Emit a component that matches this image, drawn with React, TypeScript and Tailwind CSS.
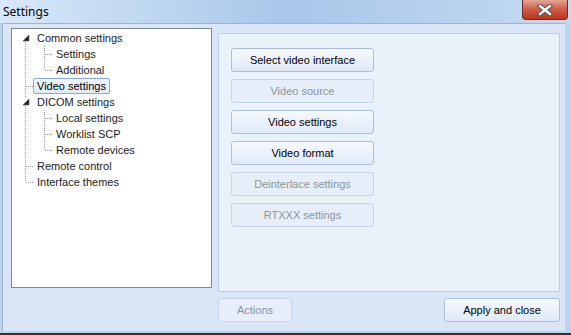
import React from 'react';

type TreeRow = {
    label: string;
    level: number;
    expander?: boolean;
    up: boolean;
    down: boolean;
    trunks: boolean[];
    selected?: boolean;
};

const rows: TreeRow[] = [
    { label: 'Common settings', level: 0, expander: true, up: false, down: true, trunks: [] },
    { label: 'Settings', level: 1, up: true, down: true, trunks: [true] },
    { label: 'Additional', level: 1, up: true, down: false, trunks: [true] },
    { label: 'Video settings', level: 0, up: true, down: true, trunks: [], selected: true },
    { label: 'DICOM settings', level: 0, expander: true, up: true, down: true, trunks: [] },
    { label: 'Local settings', level: 1, up: true, down: true, trunks: [true] },
    { label: 'Worklist SCP', level: 1, up: true, down: true, trunks: [true] },
    { label: 'Remote devices', level: 1, up: true, down: false, trunks: [true] },
    { label: 'Remote control', level: 0, up: true, down: true, trunks: [] },
    { label: 'Interface themes', level: 0, up: true, down: false, trunks: [] },
];

const DOT = '#a0a0a0';

// vertical trunk for an ancestor that still has siblings below
function Trunk({ on }: { on: boolean }) {
    return (
        <svg width="19" height="16" className="shrink-0" shapeRendering="crispEdges">
            {on && <line x1="13.5" y1="0" x2="13.5" y2="16" stroke={DOT} strokeDasharray="1 1" />}
        </svg>
    );
}

function Connector({ up, down, expander }: { up: boolean; down: boolean; expander?: boolean }) {
    return (
        <svg width="21" height="16" className="shrink-0" shapeRendering="crispEdges">
            {up && <line x1="13.5" y1="0" x2="13.5" y2="8" stroke={DOT} strokeDasharray="1 1" />}
            {down && <line x1="13.5" y1="8" x2="13.5" y2="16" stroke={DOT} strokeDasharray="1 1" />}
            {expander ? (
                <>
                    <rect x="10" y="4" width="8" height="8" fill="white" />
                    <polygon points="17,5 17,11 11,11" fill="#262626" stroke="#595959" strokeWidth="0.6" shapeRendering="auto" />
                </>
            ) : (
                <line x1="14" y1="8.5" x2="21" y2="8.5" stroke={DOT} strokeDasharray="1 1" />
            )}
        </svg>
    );
}

function Btn({ label, disabled, className }: { label: string; disabled?: boolean; className?: string }) {
    return (
        <div
            className={`flex items-center justify-center rounded-[3px] border h-[24px] ${
                disabled
                    ? 'border-[#c3d3e8] bg-[#e6eef9] text-[#8a94a0]'
                    : 'border-[#a9bfdc] bg-gradient-to-b from-[#f7fafe] to-[#dfe9f7] text-black'
            } ${className ?? ''}`}
        >
            {label}
        </div>
    );
}

export default function App() {
    return (
        <div className="w-[571px] h-[335px] flex flex-col overflow-hidden bg-[#bcd3ec] font-['Liberation_Sans',Arial,sans-serif] text-[11px]">
            {/* Title bar */}
            <div className="h-[23px] flex justify-between bg-gradient-to-r from-[#d8e8f8] via-[#a8c7e9] to-[#c4daf1] shrink-0">
                <div className="pl-[3px] pt-[4px] text-[12px] text-black font-['Noto_Sans',sans-serif] leading-[15px]">Settings</div>
                <div className="mr-[3px] w-[46px] h-[20px] rounded-b-[4px] border border-t-0 border-[#6b2a22] bg-gradient-to-b from-[#e5a496] via-[#cf5a44] to-[#b8341f] flex items-center justify-center">
                    <svg width="16" height="12" viewBox="0 0 16 12">
                        <path d="M3 2 L13 10 M13 2 L3 10" stroke="#4a4a4a" strokeWidth="4.2" strokeLinecap="square" />
                        <path d="M3 2 L13 10 M13 2 L3 10" stroke="#ffffff" strokeWidth="2.4" strokeLinecap="square" />
                    </svg>
                </div>
            </div>

            {/* Client area */}
            <div className="flex-1 flex ml-[2px] mr-[6px] mb-[2px] bg-[#dae6f5] border-l border-t border-[#9fb5cf] pt-[4px] pl-[8px]">
                {/* Tree */}
                <div className="w-[201px] h-[260px] bg-white border border-[#828790] pt-[1px] text-[#1b1b1b]">
                    {rows.map((r) => (
                        <div key={r.label} className="flex h-[16px] items-center">
                            {r.trunks.map((t, i) => (
                                <Trunk key={i} on={t} />
                            ))}
                            <Connector up={r.up} down={r.down} expander={r.expander} />
                            <span
                                className={`h-[16px] leading-[14px] border rounded-[2px] px-[3px] whitespace-nowrap ${
                                    r.selected
                                        ? 'border-[#84acdd] bg-gradient-to-b from-[#f2f7fd] to-[#e1ecfa] text-black'
                                        : 'border-transparent'
                                }`}
                            >
                                {r.label}
                            </span>
                        </div>
                    ))}
                </div>

                {/* Right column */}
                <div className="ml-[6px] w-[342px] pt-[5px] flex flex-col">
                    <div className="h-[259px] border border-[#b7cdea] rounded-[2px] bg-[#e9f1fb] pl-[12px] pt-[14px] flex flex-col gap-[7px]">
                        <Btn label="Select video interface" className="w-[143px]" />
                        <Btn label="Video source" disabled className="w-[143px]" />
                        <Btn label="Video settings" className="w-[143px]" />
                        <Btn label="Video format" className="w-[143px]" />
                        <Btn label="Deinterlace settings" disabled className="w-[143px]" />
                        <Btn label="RTXXX settings" disabled className="w-[143px]" />
                    </div>
                    <div className="mt-[6px] flex justify-between">
                        <Btn label="Actions" disabled className="w-[74px]" />
                        <Btn label="Apply and close" className="w-[116px]" />
                    </div>
                </div>
            </div>
            <div className="h-[2px] bg-[#2f3338] shrink-0" />
        </div>
    );
}
